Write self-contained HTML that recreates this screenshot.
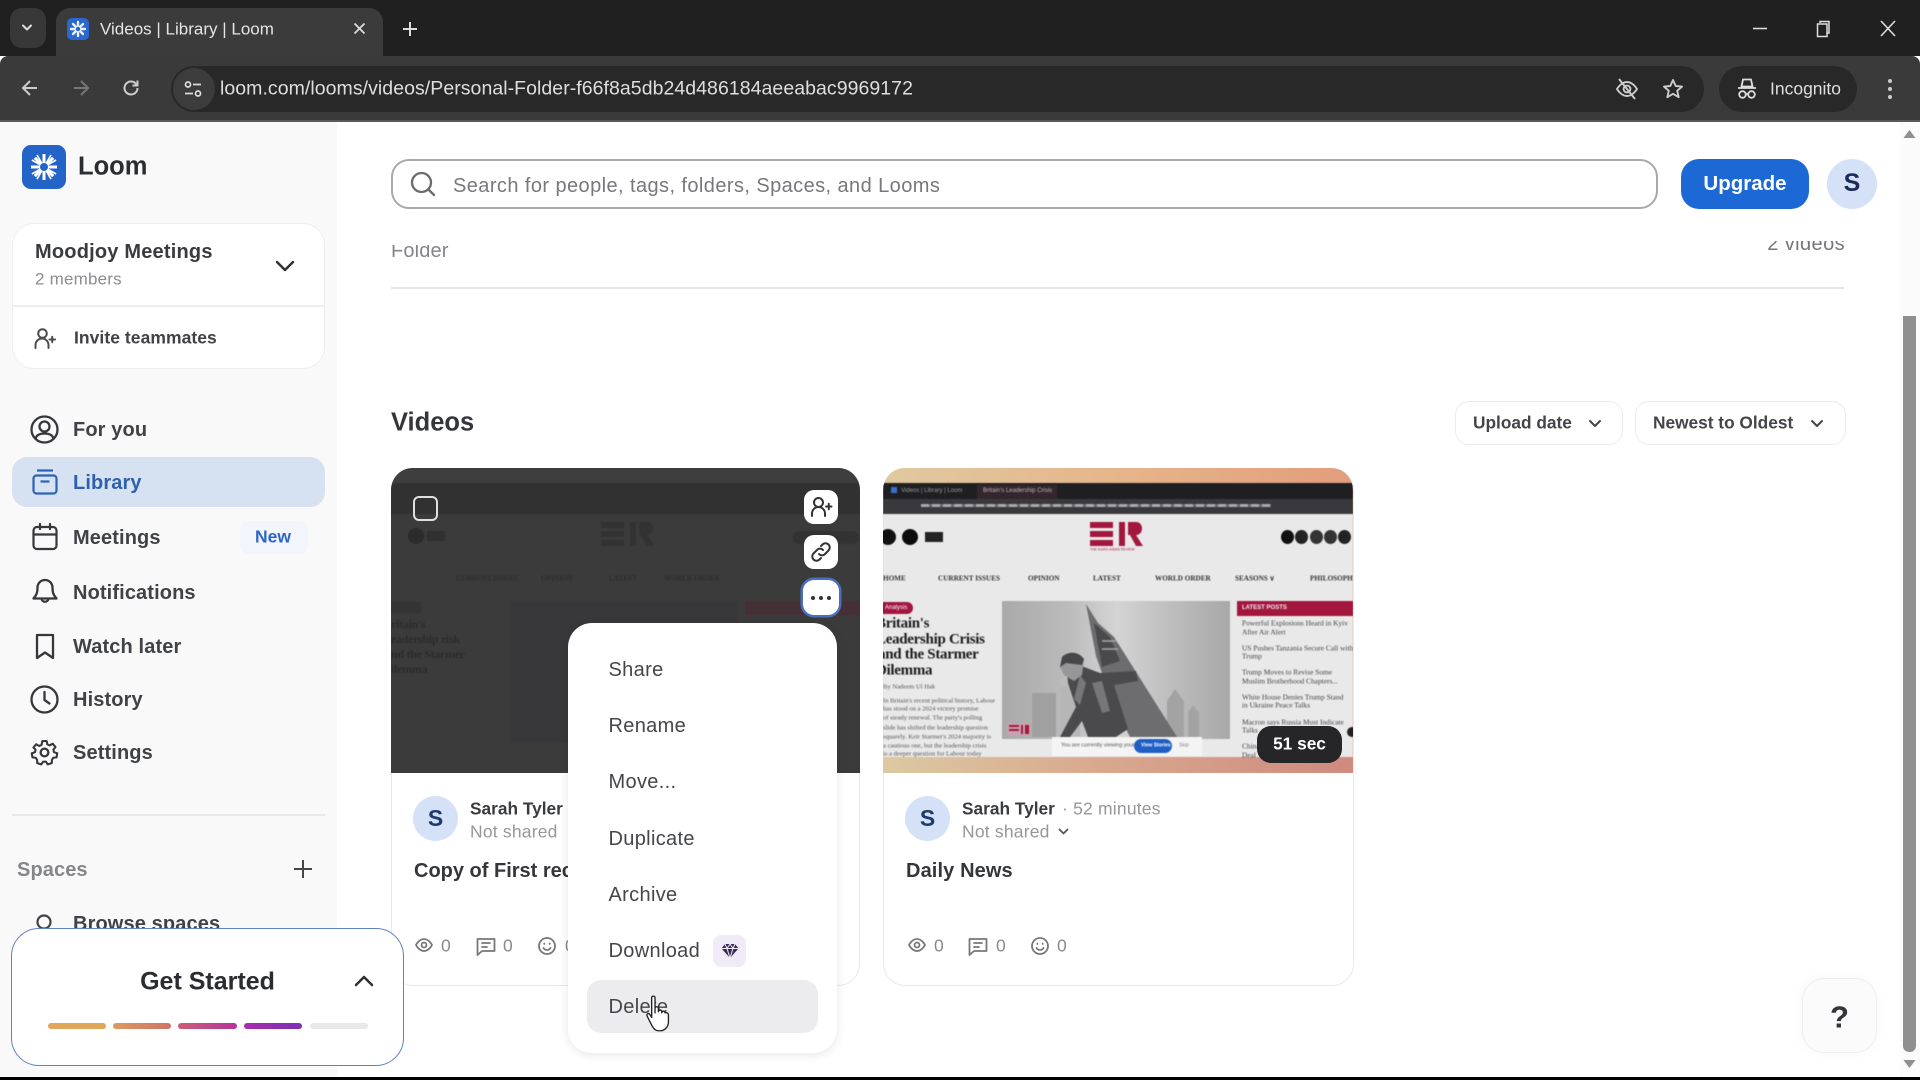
<!DOCTYPE html>
<html lang="en"><head><meta charset="utf-8"><title>Videos | Library | Loom</title>
<style>
html,body{margin:0;padding:0;width:1920px;height:1080px;overflow:hidden;background:#fff}
body{position:relative;font-family:"Liberation Sans",sans-serif;color:#333}
div,span,svg{position:absolute;box-sizing:border-box}
.t{white-space:nowrap;line-height:1;transform:translateY(calc(-50% + 1px))}
svg{overflow:visible}
.ic{fill:none;stroke:#3a3a3a;stroke-width:2;stroke-linecap:round;stroke-linejoin:round}
.nav{font-size:20px;font-weight:700;color:#404246;left:73px;letter-spacing:.12px}
.mi{font-size:20px;color:#454649;left:608.5px;letter-spacing:.33px}
.nm{font-size:17.3px;font-weight:700;color:#3a3b3e}
.ns{font-size:17.5px;color:#96979a;letter-spacing:.2px}
.st{font-size:17.5px;color:#8a8a8c}
.sic{fill:none;stroke:#77787a;stroke-width:1.8;stroke-linecap:round;stroke-linejoin:round}
.av{width:45px;height:45px;border-radius:50%;background:#d4e1f7;color:#1f3a6e;font-weight:700;font-size:23px;text-align:center;line-height:45px}
.ser{font-family:"Liberation Serif",serif}
.navt{font-family:"Liberation Serif",serif;font-size:7.2px;font-weight:700;color:#333;top:110px}
.li{font-family:"Liberation Serif",serif;font-size:7.4px;color:#444;left:359px}
.bd{font-family:"Liberation Serif",serif;font-size:6.6px;color:#555;left:0}
.h{font-family:"Liberation Serif",serif;font-size:15px;font-weight:700;letter-spacing:-.3px;color:#1b1b1c}
.blur{filter:blur(.6px)}
</style></head><body>

<!-- browser chrome -->
<div style="left:0;top:0;width:1920px;height:56px;background:#202020"></div>
<div style="left:10px;top:8px;width:36px;height:40px;border-radius:12px;background:#383838"></div>
<svg style="left:21px;top:23px" width="12" height="10" class="ic"><path d="M2 2.500 6 6.500 10 2.500" stroke="#ddd"/></svg>
<div style="left:56px;top:8px;width:327px;height:50px;background:#3b3b3b;border-radius:14px 14px 0 0"></div>
<div style="left:67px;top:18px;width:22px;height:22px;border-radius:5px;background:#2a68d0"></div>
<svg style="left:70px;top:21px" width="16" height="16"><g stroke="#eaf2ff" stroke-width="2.400" stroke-linecap="round"><path d="M8 1v14M1 8h14M3 3l10 10M13 3 3 13"/></g><circle cx="8" cy="8" r="2.200" fill="#2a68d0"/></svg>
<div class="t" style="left:100px;top:28px;font-size:17px;color:#e4e4e4">Videos | Library | Loom</div>
<svg style="left:353px;top:22px" width="13" height="13"><path d="M1.500 1.500 11.500 11.500M11.500 1.500 1.500 11.500" stroke="#ddd" stroke-width="1.800"/></svg>
<svg style="left:402px;top:21px" width="16" height="16"><path d="M8 1v14M1 8h14" stroke="#ddd" stroke-width="2"/></svg>
<svg style="left:1752px;top:27px" width="16" height="3"><path d="M1 1.500h14" stroke="#ddd" stroke-width="1.600"/></svg>
<svg style="left:1816px;top:20px" width="15" height="18"><path d="M4 3V1.500h9V13h-2M1.500 4h9.500v12.500H1.500z" fill="none" stroke="#ddd" stroke-width="1.500"/></svg>
<svg style="left:1880px;top:20px" width="16" height="17"><path d="M1 1 15 16M15 1 1 16" stroke="#ddd" stroke-width="1.600"/></svg>

<div style="left:0;top:56px;width:1920px;height:66px;background:#3a3a3a;border-radius:8px 8px 0 0"></div>
<div style="left:0;top:120px;width:1920px;height:2px;background:#5a5a5a"></div>
<svg style="left:21px;top:79px" width="18" height="18"><path d="M16 9H2M9 2 2 9l7 7" fill="none" stroke="#ccc" stroke-width="2"/></svg>
<svg style="left:72px;top:79px" width="18" height="18"><path d="M2 9h14M9 2l7 7-7 7" fill="none" stroke="#777" stroke-width="2"/></svg>
<svg style="left:122px;top:79px" width="18" height="18"><path d="M15.500 9A6.500 6.500 0 1 1 13.600 4.400L15.500 6.300M15.500 1.500v5h-5" fill="none" stroke="#ccc" stroke-width="2"/></svg>
<div style="left:171px;top:66px;width:1533px;height:46px;border-radius:23px;background:#282828"></div>
<div style="left:173px;top:68px;width:42px;height:42px;border-radius:50%;background:#3c3c3c"></div>
<svg style="left:184px;top:80px" width="18" height="18" fill="none" stroke="#ddd" stroke-width="1.700"><circle cx="4" cy="4.500" r="2.500"/><path d="M9 4.500h8M1 13.500h8"/><circle cx="14" cy="13.500" r="2.500"/></svg>
<div class="t" style="left:220px;top:88px;font-size:19.500px;color:#dedede;letter-spacing:.05px">loom.com/looms/videos/Personal-Folder-f66f8a5db24d486184aeeabac9969172</div>
<svg style="left:1615px;top:77px" width="24" height="24" fill="none" stroke="#ccc" stroke-width="1.900"><path d="M2 12s4-7 10-7 10 7 10 7-4 7-10 7S2 12 2 12z"/><circle cx="12" cy="12" r="3.400"/><path d="M4 2l16 20"/></svg>
<svg style="left:1662px;top:78px" width="22" height="22"><path d="M11 2l2.700 6 6.300.6-4.800 4.200 1.500 6.400L11 15.800l-5.700 3.400 1.500-6.400L2 8.600 8.300 8z" fill="none" stroke="#ccc" stroke-width="1.900" stroke-linejoin="round"/></svg>
<div style="left:1719px;top:66px;width:138px;height:46px;border-radius:23px;background:#282828"></div>
<svg style="left:1737px;top:78px" width="20" height="22" fill="none" stroke="#ddd" stroke-width="1.800"><path d="M6 1.500h8l1.500 7h-11zM1 10h18"/><circle cx="5.500" cy="16.500" r="3.300"/><circle cx="14.500" cy="16.500" r="3.300"/><path d="M8.800 16h2.400"/></svg>
<div class="t" style="left:1770px;top:88px;font-size:17.500px;color:#dedede">Incognito</div>
<div style="left:1888px;top:79px;width:4px;height:4px;border-radius:50%;background:#ccc"></div>
<div style="left:1888px;top:87px;width:4px;height:4px;border-radius:50%;background:#ccc"></div>
<div style="left:1888px;top:95px;width:4px;height:4px;border-radius:50%;background:#ccc"></div>

<!-- sidebar -->
<div style="left:0;top:122px;width:337px;height:955px;background:#f9f9fa"></div>
<div style="left:22px;top:145px;width:44px;height:44px;border-radius:9px;background:#2464c8"></div>
<svg style="left:30px;top:153px" width="28" height="28"><g stroke="#fff" stroke-width="3"><path d="M14 1v26M1 14h26M4.800 4.800l18.400 18.400M23.200 4.800 4.800 23.200"/><path d="M7 1.900l14 24.200M21 1.900 7 26.100M1.900 7l24.200 14M1.900 21l24.200-14" stroke-width="1.600"/></g><circle cx="14" cy="14" r="4" fill="#2464c8"/></svg>
<div class="t" style="left:78px;top:166px;font-size:25.500px;font-weight:700;color:#2c2d30">Loom</div>

<div style="left:12px;top:223px;width:313px;height:146px;background:#fff;border:1.500px solid #eeeeef;border-radius:22px"></div>
<div style="left:12px;top:305px;width:313px;height:2px;background:#eeeeef"></div>
<div class="t" style="left:35px;top:251px;font-size:20px;font-weight:700;color:#3a3b3e;letter-spacing:.2px">Moodjoy Meetings</div>
<div class="t" style="left:35px;top:278px;font-size:17px;color:#8c8d90;letter-spacing:.2px">2 members</div>
<svg style="left:275px;top:259px" width="20" height="14" class="ic"><path d="M2 3l8 8 8-8" stroke="#2f3033" style="stroke-width:2.400"/></svg>
<svg style="left:33px;top:327px" width="24" height="24" class="ic"><circle cx="9.500" cy="6.500" r="4.300" stroke="#4a4b4e"/><path d="M2.500 21v-3a6.500 6.500 0 0 1 13 0v3M16.500 12.500h5.500M19.200 9.800v5.400" stroke="#4a4b4e"/></svg>
<div class="t" style="left:74px;top:337px;font-size:17.500px;font-weight:700;color:#404246;letter-spacing:.05px">Invite teammates</div>

<svg style="left:30px;top:415px;stroke-width:2.300" width="29" height="29" class="ic"><circle cx="14.500" cy="14.500" r="13" stroke="#36373a"/><circle cx="14.500" cy="11.500" r="5" stroke="#36373a"/><path d="M5.500 23.500c1-3.500 4-5 9-5s8 1.500 9 5" stroke="#36373a"/></svg>
<div class="t nav" style="top:429px">For you</div>

<div style="left:12px;top:457px;width:313px;height:50px;border-radius:15px;background:#d6e2f2"></div>
<svg style="left:32px;top:469px" width="26" height="26" fill="none" stroke="#2d62b5" stroke-width="2.200"><path d="M5 1.500h16"/><rect x="1.500" y="6.500" width="23" height="18" rx="3"/><path d="M8.500 12.500h9"/></svg>
<div class="t nav" style="top:482px;color:#2f5fae">Library</div>

<svg style="left:32px;top:523px" width="26" height="28" fill="none" stroke="#36373a" stroke-width="2.200" stroke-linecap="round"><rect x="1.500" y="4" width="23" height="22" rx="3.500"/><path d="M1.500 11.500h23M8 1v5M18 1v5"/></svg>
<div class="t nav" style="top:537px">Meetings</div>
<div style="left:240px;top:521px;width:68px;height:33px;border-radius:8px;background:#f2f5fb"></div>
<div class="t" style="left:255px;top:536px;font-size:17.500px;font-weight:700;color:#2b65c8">New</div>

<svg style="left:32px;top:578px;stroke-width:2.300" width="26" height="29" class="ic"><path d="M13 2a7.500 7.500 0 0 0-7.500 7.500c0 6-1.500 8-4 11h23c-2.500-3-4-5-4-11A7.500 7.500 0 0 0 13 2zM9.500 21a3.600 3.600 0 0 0 7 0" stroke="#36373a"/></svg>
<div class="t nav" style="top:592px">Notifications</div>
<svg style="left:35px;top:633px;stroke-width:2.300" width="20" height="27" class="ic"><path d="M2 2h16v23l-8-5.500L2 25z" stroke="#36373a"/></svg>
<div class="t nav" style="top:646px">Watch later</div>
<svg style="left:30px;top:685px;stroke-width:2.300" width="29" height="29" class="ic"><circle cx="14.500" cy="14.500" r="13" stroke="#36373a"/><path d="M14.500 7v8l5 3.500" stroke="#36373a"/></svg>
<div class="t nav" style="top:699px">History</div>
<svg style="left:30px;top:738px" width="29" height="29" viewBox="0 0 24 24" fill="none" stroke="#36373a" stroke-width="1.900" stroke-linejoin="round"><circle cx="12" cy="12" r="3.200"/><path d="M10 1.500h4l.6 3 2.200 1 2.700-1.600 2.600 3-1.900 2.500.5 2.300 3 1-.6 3.800-3 .3-1.300 2-.1 3-3.700 1.100-1.800-2.500h-2.400l-1.800 2.500-3.700-1.100-.1-3-1.300-2-3-.3-.6-3.800 3-1 .5-2.300L1.800 7.400l2.600-3 2.700 1.600 2.200-1z" transform="translate(1.200 1.200) scale(.9)"/></svg>
<div class="t nav" style="top:752px">Settings</div>
<div style="left:12px;top:814px;width:313px;height:2px;background:#e9e9ea"></div>
<div class="t" style="left:17px;top:869px;font-size:20px;font-weight:700;color:#85868a;letter-spacing:.1px">Spaces</div>
<svg style="left:293px;top:859px" width="20" height="20"><path d="M10 1v18M1 10h18" stroke="#45464a" stroke-width="2"/></svg>
<svg style="left:36px;top:914px;stroke-width:2.200" width="18" height="18" class="ic"><circle cx="8" cy="8" r="6.500" stroke="#404246"/></svg>
<div class="t nav" style="top:923px">Browse spaces</div>

<!-- main header -->
<div style="left:391px;top:245px;width:120px;height:22px;overflow:hidden"><div class="t" style="left:0;top:5px;font-size:20px;color:#85868a;letter-spacing:.15px">Folder</div></div>
<div style="left:1736px;top:241px;width:110px;height:10px;overflow:hidden"><div class="t" style="right:1px;top:2px;font-size:20px;color:#75767a;letter-spacing:.4px">2 videos</div></div>
<div style="left:391px;top:287px;width:1453px;height:1.500px;background:#e4e4e5"></div>
<div style="left:391px;top:159px;width:1267px;height:50px;border:2px solid #a9a9ab;border-radius:18px;background:#fff"></div>
<svg style="left:410px;top:171px" width="26" height="26" fill="none" stroke="#6a6b6e" stroke-width="2.300" stroke-linecap="round"><circle cx="11.500" cy="11.500" r="9.500"/><path d="M18.500 18.500 24 24"/></svg>
<div class="t" style="left:453px;top:185px;font-size:20px;color:#77787b;letter-spacing:.42px">Search for people, tags, folders, Spaces, and Looms</div>
<div style="left:1681px;top:159px;width:128px;height:50px;border-radius:18px;background:#1c68d4"></div>
<div class="t" style="left:1681px;width:128px;text-align:center;top:183px;font-size:20.500px;font-weight:700;color:#fff">Upgrade</div>
<div style="left:1827px;top:159px;width:50px;height:50px;border-radius:50%;background:#d5e1f7;color:#1b2c5a;font-weight:700;font-size:25px;text-align:center;line-height:49px">S</div>

<div class="t" style="left:391px;top:422px;font-size:25.500px;font-weight:700;color:#35363a">Videos</div>
<div style="left:1455px;top:401px;width:168px;height:44px;border:1.500px solid #ebebec;border-radius:14px;background:#fff"></div>
<div class="t" style="left:1473px;top:422px;font-size:17.300px;font-weight:700;color:#44454a">Upload date</div>
<svg style="left:1588px;top:419px" width="14" height="10" class="ic"><path d="M2 2l5 5 5-5" stroke="#44454a"/></svg>
<div style="left:1635px;top:401px;width:211px;height:44px;border:1.500px solid #ebebec;border-radius:14px;background:#fff"></div>
<div class="t" style="left:1653px;top:422px;font-size:17.300px;font-weight:700;color:#44454a">Newest to Oldest</div>
<svg style="left:1810px;top:419px" width="14" height="10" class="ic"><path d="M2 2l5 5 5-5" stroke="#44454a"/></svg>

<!-- card 1 -->
<div style="left:391px;top:468px;width:469px;height:518px;border:1.500px solid #e8e8ea;border-radius:22px;background:#fff"></div>
<div style="left:391px;top:468px;width:469px;height:305px;border-radius:22px 22px 0 0;background:#3b3b3c;overflow:hidden">
 <div class="blur" style="left:0;top:0;width:469px;height:305px">
  <div style="left:0;top:15px;width:469px;height:31px;background:#313132"></div>
  <div style="left:0;top:0;width:469px;height:15px;background:#3e3e3e"></div>
  <div style="left:17px;top:60px;width:16px;height:16px;border-radius:50%;background:#2c2c2d"></div>
  <div style="left:36px;top:63px;width:18px;height:10px;background:#303031"></div>
  <svg style="left:210px;top:53px" width="52" height="30"><path d="M0 1h23v6H0zM0 10h23v6H0zM0 19h23v6H0zM29 1h6v24h-6zM38 1h8c8 0 8 13 0 13l7 11h-7l-6-11h-2z" fill="#323233"/></svg>
  <div style="left:402px;top:63px;width:66px;height:13px;border-radius:7px;background:#323233"></div>
  <div class="navt t" style="left:65px;color:#2e2e2f">CURRENT ISSUES</div><div class="navt t" style="left:150px;color:#2e2e2f">OPINION</div><div class="navt t" style="left:218px;color:#2e2e2f">LATEST</div><div class="navt t" style="left:273px;color:#2e2e2f">WORLD ORDER</div>
  <div style="left:0;top:134px;width:30px;height:11px;background:#343435"></div>
  <div class="t h" style="left:0;top:155px;color:#2c2c2d;font-size:12px">ritain's</div>
  <div class="t h" style="left:0;top:170px;color:#2c2c2d;font-size:12px">eadership risk</div>
  <div class="t h" style="left:0;top:185px;color:#2c2c2d;font-size:12px">nd the Starmer</div>
  <div class="t h" style="left:0;top:200px;color:#2c2c2d;font-size:12px">ilemma</div>
  <div style="left:119px;top:133px;width:228px;height:142px;background:#38383a"></div>
  <div style="left:354px;top:133px;width:115px;height:14px;background:#453036"></div>
 </div>
</div>
<div style="left:413px;top:496px;width:25px;height:25px;border:2.200px solid #dfdfdf;border-radius:6px"></div>
<div style="left:804px;top:490px;width:34px;height:34px;border-radius:10px;background:#fff"></div>
<svg style="left:810px;top:496px" width="22" height="22" class="ic"><circle cx="8.500" cy="6.500" r="4.500" stroke="#333"/><path d="M2 20v-2.500a6.500 6.500 0 0 1 13 0V20M16 10.500h5.500M18.800 7.800v5.400" stroke="#333"/></svg>
<div style="left:804px;top:535px;width:34px;height:34px;border-radius:10px;background:#fff"></div>
<svg style="left:811px;top:542px" width="20" height="20" class="ic"><path d="M8 12a4 4 0 0 0 6 0l3.500-3.500a4 4 0 0 0-6-6L10 4M12 8a4 4 0 0 0-6 0L2.500 11.500a4 4 0 0 0 6 6L10 16" stroke="#333"/></svg>
<div style="left:803px;top:580px;width:36px;height:35px;border-radius:11px;background:#fff;box-shadow:0 0 0 2.500px #4a6fbe"></div>
<div style="left:811px;top:596px;width:4px;height:4px;border-radius:50%;background:#333"></div>
<div style="left:819px;top:596px;width:4px;height:4px;border-radius:50%;background:#333"></div>
<div style="left:827px;top:596px;width:4px;height:4px;border-radius:50%;background:#333"></div>

<div class="av" style="left:413px;top:796px">S</div>
<div class="t nm" style="left:470px;top:808px">Sarah Tyler</div>
<div class="t ns" style="left:470px;top:831px">Not shared</div>
<div class="t" style="left:414px;top:870px;font-size:20px;font-weight:700;color:#35363a">Copy of First recording</div>
<svg style="left:415px;top:938px" width="18" height="14" class="sic"><path d="M1 7s3-6 8-6 8 6 8 6-3 6-8 6-8-6-8-6z"/><circle cx="9" cy="7" r="2.500"/></svg>
<div class="t st" style="left:441px;top:945px">0</div>
<svg style="left:476px;top:937px" width="20" height="19" class="sic"><path d="M1.500 2h17v12H6l-4.500 4zM6 6h8M6 10h5"/></svg>
<div class="t st" style="left:503px;top:945px">0</div>
<svg style="left:538px;top:937px" width="18" height="18" class="sic"><circle cx="9" cy="9" r="8"/><path d="M5.500 11c1 1.500 2 2 3.500 2s2.500-.5 3.500-2M6.300 6.500v.5M11.700 6.500v.5"/></svg>
<div class="t st" style="left:565px;top:945px">0</div>

<!-- card 2 -->
<div style="left:883px;top:468px;width:471px;height:518px;border:1.500px solid #e8e8ea;border-radius:22px;background:#fff"></div>
<div style="left:883px;top:468px;width:470px;height:305px;border-radius:22px 22px 0 0;overflow:hidden;background:linear-gradient(90deg,#e0c9a0 0,#e6b58c 50%,#e29d7c 100%)">
 <div class="blur" style="left:0;top:0;width:470px;height:305px">
  <div style="left:0;top:289px;width:470px;height:16px;background:linear-gradient(90deg,#dcc9a2 0,#d9a98f 45%,#cf8a80 100%)"></div>
  <div style="left:0;top:15px;width:470px;height:16px;background:#1f1f22"></div>
  <div style="left:0;top:31px;width:470px;height:15px;background:#39393c"></div>
  <div style="left:8px;top:19px;width:6px;height:6px;background:#3a6fd0"></div>
  <div class="t" style="left:18px;top:22px;font-size:6px;color:#999">Videos | Library | Loom</div>
  <div style="left:94px;top:17px;width:80px;height:14px;background:#35252c"></div>
  <div class="t" style="left:100px;top:22px;font-size:6px;color:#bbb">Britain's Leadership Crisis</div>
  <div style="left:38px;top:36px;width:350px;height:3px;background:repeating-linear-gradient(90deg,#a9a9ab 0 8px,#6a6a6c 8px 11px)"></div>
  <div style="left:0;top:46px;width:470px;height:243px;background:#e9e9ea"></div>
  <div style="left:-3px;top:61px;width:16px;height:16px;border-radius:50%;background:#111"></div>
  <div style="left:19px;top:61px;width:16px;height:16px;border-radius:50%;background:#0b0b0b"></div>
  <div style="left:42px;top:64px;width:18px;height:10px;background:#222"></div>
  <svg style="left:207px;top:53px" width="52" height="30"><path d="M0 1h23v6H0zM0 10h23v6H0zM0 19h23v6H0zM29 1h6v24h-6zM38 1h8c8 0 8 13 0 13l7 11h-7l-6-11h-2z" fill="#a3173f"/></svg>
  <div class="t" style="left:207px;top:81px;font-size:3.500px;color:#a3173f">THE EURO-ASIAN REVIEW</div>
  <div style="left:398px;top:62px;width:13px;height:14px;border-radius:50%;background:#111"></div>
  <div style="left:412px;top:62px;width:13px;height:14px;border-radius:50%;background:#222"></div>
  <div style="left:427px;top:62px;width:13px;height:14px;border-radius:50%;background:#333"></div>
  <div style="left:441px;top:62px;width:13px;height:14px;border-radius:50%;background:#333"></div>
  <div style="left:455px;top:62px;width:13px;height:14px;border-radius:50%;background:#222"></div>
  <div class="t navt" style="left:0">HOME</div><div class="t navt" style="left:55px">CURRENT ISSUES</div><div class="t navt" style="left:145px">OPINION</div><div class="t navt" style="left:210px">LATEST</div><div class="t navt" style="left:272px">WORLD ORDER</div><div class="t navt" style="left:352px">SEASONS ∨</div><div class="t navt" style="left:427px">PHILOSOPHY</div>
  <div style="left:-8px;top:134px;width:38px;height:12px;border-radius:6px;background:#a3173f"></div>
  <div class="t" style="left:2px;top:139px;font-size:6px;color:#fff">Analysis</div>
  <div class="t h" style="left:-7px;top:155px">Britain's</div>
  <div class="t h" style="left:-7px;top:171px">Leadership Crisis</div>
  <div class="t h" style="left:-5px;top:186px">and the Starmer</div>
  <div class="t h" style="left:-7px;top:202px">Dilemma</div>
  <div class="t bd" style="top:219px">By Nadeem Ul Hak</div>
  <div class="t bd" style="top:233px">In Britain's recent political history, Labour</div>
  <div class="t bd" style="top:241px">has stood on a 2024 victory promise</div>
  <div class="t bd" style="top:250px">of steady renewal. The party's polling</div>
  <div class="t bd" style="top:260px">slide has shifted the leadership question</div>
  <div class="t bd" style="top:269px">squarely. Keir Starmer's 2024 majority is</div>
  <div class="t bd" style="top:278px">a cautious one, but the leadership crisis</div>
  <div class="t bd" style="top:286px">is a deeper question for Labour today</div>
  <svg style="left:119px;top:133px" width="228" height="142" viewBox="0 0 228 142">
    <defs><linearGradient id="g" x1="0" x2="1" y1="0" y2="0"><stop offset="0" stop-color="#a9a9aa"/><stop offset=".3" stop-color="#bcbcbd"/><stop offset=".5" stop-color="#d4d4d5"/><stop offset=".75" stop-color="#bdbdbe"/><stop offset="1" stop-color="#a8a8a9"/></linearGradient></defs>
    <rect width="228" height="142" fill="url(#g)"/>
    <rect x="30" y="92" width="24" height="44" fill="#a0a0a1"/><rect x="60" y="85" width="18" height="50" fill="#b6b6b7"/>
    <path d="M165 100l8-12 9 12v36h-17zM186 112l5-8 6 8v24h-11z" fill="#a3a3a4"/>
    <path d="M84 3 96 22 112 36 175 136H128L108 95 94 55z" fill="#6d6d6f"/>
    <path d="M92 22 108 36 118 60 100 66z" fill="#4a4a4c"/>
    <path d="M100 40h14M100 48h16" stroke="#a8a8a9" stroke-width="1.500"/>
    <path d="M64 58l18 8 16 6 36-2 2 10-24 4 14 44-12 8H86l-6-16-12 16H58l16-30-8-24z" fill="#4a4a4c"/>
    <path d="M90 82l10 30 8-2-8-30zM78 74l-6 24 6 6 6-22z" fill="#777779"/>
    <path d="M60 56c6-6 16-6 22 2l-2 16-8 6-10-6-4-8z" fill="#979798"/>
    <path d="M60 56c6-6 16-6 22 2l-2 6-16-2-6 4z" fill="#47474a"/>
    <path d="M5 122h24v12H5z" fill="#c8a3ae"/><path d="M7 124h10v2H7zM7 128h10v2H7zM19 124h2v9h-2zM23 124h4v9h-4z" fill="#a3173f"/>
    <rect y="138" width="228" height="4" fill="#e9e9ea"/>
  </svg>
  <div style="left:169px;top:269px;width:150px;height:19px;background:#f4f4f4"></div>
  <div class="t" style="left:178px;top:277px;font-size:5.500px;color:#555">You are currently viewing your story</div>
  <div style="left:251px;top:271px;width:38px;height:14px;border-radius:7px;background:#1f5fc5"></div>
  <div class="t" style="left:258px;top:277px;font-size:5px;font-weight:700;color:#fff">View Stories</div>
  <div class="t" style="left:296px;top:277px;font-size:5px;color:#888">Skip</div>
  <div style="left:354px;top:133px;width:116px;height:15px;background:#a3173f"></div>
  <div class="t" style="left:359px;top:139px;font-size:6px;font-weight:700;color:#eee">LATEST POSTS</div>
  <div class="t li" style="top:154px">Powerful Explosions Heard in Kyiv</div><div class="t li" style="top:163px">After Air Alert</div>
  <div class="t li" style="top:179px">US Pushes Tanzania Secure Call with</div><div class="t li" style="top:187px">Trump</div>
  <div class="t li" style="top:203px">Trump Moves to Revise Some</div><div class="t li" style="top:212px">Muslim Brotherhood Chapters...</div>
  <div class="t li" style="top:228px">White House Denies Trump Stand</div><div class="t li" style="top:236px">in Ukraine Peace Talks</div>
  <div class="t li" style="top:253px">Macron says Russia Must Indicate</div><div class="t li" style="top:261px">Talks</div>
  <div class="t li" style="top:277px">China Warns of Trade Curbs</div><div class="t li" style="top:286px">Deal</div>
  <div style="left:464px;top:259px;width:10px;height:10px;border-radius:50%;background:#222"></div>
 </div>
</div>
<div style="left:1257px;top:726px;width:85px;height:37px;border-radius:14px;background:#262527"></div>
<div class="t" style="left:1257px;width:85px;text-align:center;top:743px;font-size:17.300px;font-weight:700;color:#fff">51 sec</div>
<div class="av" style="left:905px;top:796px">S</div>
<div class="t nm" style="left:962px;top:808px">Sarah Tyler</div>
<div class="t ns" style="left:1062px;top:808px">· 52 minutes</div>
<div class="t ns" style="left:962px;top:831px">Not shared</div>
<svg style="left:1058px;top:828px" width="11" height="8" class="sic"><path d="M1.500 1.500 5.500 5.500 9.500 1.500" stroke="#55565a"/></svg>
<div class="t" style="left:906px;top:870px;font-size:20px;font-weight:700;color:#35363a;letter-spacing:.12px">Daily News</div>
<svg style="left:908px;top:938px" width="18" height="14" class="sic"><path d="M1 7s3-6 8-6 8 6 8 6-3 6-8 6-8-6-8-6z"/><circle cx="9" cy="7" r="2.500"/></svg>
<div class="t st" style="left:934px;top:945px">0</div>
<svg style="left:968px;top:937px" width="20" height="19" class="sic"><path d="M1.500 2h17v12H6l-4.500 4zM6 6h8M6 10h5"/></svg>
<div class="t st" style="left:996px;top:945px">0</div>
<svg style="left:1031px;top:937px" width="18" height="18" class="sic"><circle cx="9" cy="9" r="8"/><path d="M5.500 11c1 1.500 2 2 3.500 2s2.500-.5 3.500-2M6.300 6.500v.5M11.700 6.500v.5"/></svg>
<div class="t st" style="left:1057px;top:945px">0</div>

<!-- menu -->
<div style="left:568px;top:623px;width:269px;height:430px;border-radius:24px;background:#fff;box-shadow:0 2px 10px rgba(0,0,0,.1)"></div>
<div style="left:587px;top:980px;width:231px;height:53px;border-radius:14px;background:#ececee"></div>
<div class="t mi" style="top:669px">Share</div>
<div class="t mi" style="top:725px">Rename</div>
<div class="t mi" style="top:781px">Move...</div>
<div class="t mi" style="top:838px">Duplicate</div>
<div class="t mi" style="top:894px">Archive</div>
<div class="t mi" style="top:950px">Download</div>
<div class="t mi" style="top:1006px">Delete</div>
<div style="left:713px;top:935px;width:33px;height:32px;border-radius:8px;background:#f0ebf7"></div>
<svg style="left:721px;top:943px" width="18" height="16"><path d="M4 1h10l3.500 4.500L9 15 .5 5.500z" fill="#3b2a57"/><path d="M.5 5.500h17M6 5.500 9 15l3-9.500M4 1l2 4.500L9 1l3 4.500L14 1" fill="none" stroke="#f0ebf7" stroke-width="1"/></svg>
<svg style="left:646px;top:995px" width="27" height="38" viewBox="0 0 24 34"><path d="M5 2.500c0-2 3-2 3 0V16l0-4c0-2 3-2 3 0v3c0-2 3-2 3 0v1c0-2 3-2 3 0 0 0 3-1 3 2v6c0 4-3 8-7 8h-2c-3 0-4-2-6-5L1 19c-1-2 1-3 2-2l2 3z" fill="#fff" stroke="#222" stroke-width="1.200" stroke-linejoin="round"/></svg>

<!-- get started -->
<div style="left:11px;top:928px;width:393px;height:138px;border:1.500px solid #5f83bb;border-radius:28px;background:#fff"></div>
<div class="t" style="left:11px;width:393px;text-align:center;top:981px;font-size:25px;font-weight:700;color:#2b2c2f">Get Started</div>
<svg style="left:354px;top:974px" width="20" height="13" class="ic"><path d="M2 11l8-8 8 8" stroke="#2f3033" style="stroke-width:2.500"/></svg>
<div style="left:48px;top:1023px;width:58px;height:6px;border-radius:3px;background:#e0a65a"></div>
<div style="left:113px;top:1023px;width:58px;height:6px;border-radius:3px;background:linear-gradient(90deg,#dc9a5c,#d17368)"></div>
<div style="left:178px;top:1023px;width:59px;height:6px;border-radius:3px;background:linear-gradient(90deg,#cc5f74,#b4349c)"></div>
<div style="left:244px;top:1023px;width:58px;height:6px;border-radius:3px;background:linear-gradient(90deg,#a82eac,#7c30b5)"></div>
<div style="left:310px;top:1023px;width:58px;height:6px;border-radius:3px;background:#e9e9ea"></div>

<!-- help + scrollbar -->
<div style="left:1802px;top:978px;width:75px;height:75px;border-radius:22px;background:#fbfbfb;border:1.500px solid #efefef;box-shadow:0 0 12px rgba(0,0,0,.04)"></div>
<div class="t" style="left:1802px;width:75px;text-align:center;top:1016px;font-size:31px;font-weight:700;color:#34353a">?</div>
<div style="left:1900px;top:122px;width:20px;height:955px;background:#fbfbfb"></div>
<svg style="left:1903px;top:129px" width="13" height="10"><path d="M6.500 1 12.500 9H.5z" fill="#8f8f90"/></svg>
<div style="left:1903px;top:316px;width:13px;height:736px;border-radius:0 0 6px 6px;background:#8f8f90"></div>
<svg style="left:1903px;top:1059px" width="13" height="10"><path d="M.5 1h12L6.500 9z" fill="#8f8f90"/></svg>
<div style="left:0;top:1077px;width:1920px;height:3px;background:#000"></div>
</body></html>
